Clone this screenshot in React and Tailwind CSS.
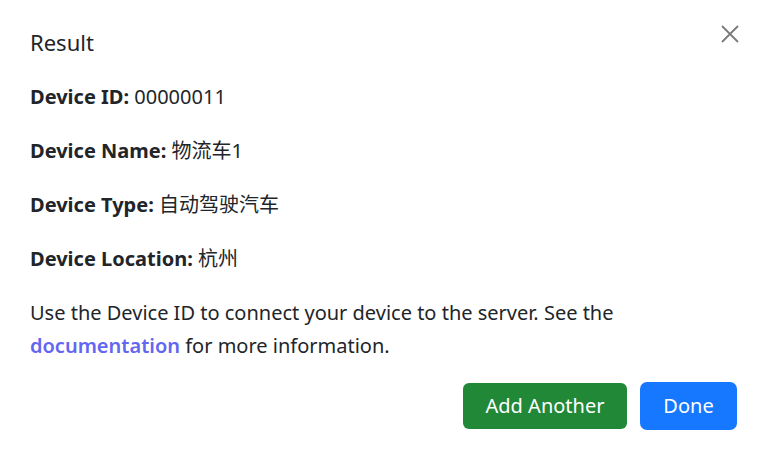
export default function App() {
  const rows = [
    ["Device ID:", "00000011"],
    ["Device Name:", "物流车1"],
    ["Device Type:", "自动驾驶汽车"],
    ["Device Location:", "杭州"],
  ];
  return (
    <div
      className="w-[764px] h-[453px] bg-white text-[#212529] relative"
      style={{ fontFamily: '"Noto Sans", "Noto Sans CJK SC", sans-serif' }}
    >
      <button className="absolute right-[24px] top-[24px] w-[20px] h-[20px] flex items-center justify-center">
        <svg width="20" height="20" viewBox="0 0 20 20" fill="none" stroke="#7a7a7a" strokeWidth="1.8">
          <path d="M2 2 L18 18 M18 2 L2 18" />
        </svg>
      </button>
      <div className="px-[30px] pt-[26px]">
        <h2 className="text-[22px] leading-[32px]">Result</h2>
        <div className="mt-[25px] flex flex-col gap-[26px]">
          {rows.map(([k, v]) => (
            <p key={k} className="text-[20px] leading-[28px]">
              <span className="font-bold">{k}</span> {v}
            </p>
          ))}
        </div>
        <p className="mt-[23px] text-[20px] leading-[33px]">
          Use the Device ID to connect your device to the server. See the
          <br />
          <a className="text-[#6366f1] font-semibold">documentation</a> for more information.
        </p>
        <div className="mt-[20px] flex justify-end items-center gap-[13px] -mr-[3px]">
          <button className="h-[46px] w-[164px] rounded-[6px] bg-[#218838] text-white text-[20px]">
            Add Another
          </button>
          <button className="h-[48px] w-[97px] rounded-[7px] bg-[#1677ff] text-white text-[20px]">
            Done
          </button>
        </div>
      </div>
    </div>
  );
}
